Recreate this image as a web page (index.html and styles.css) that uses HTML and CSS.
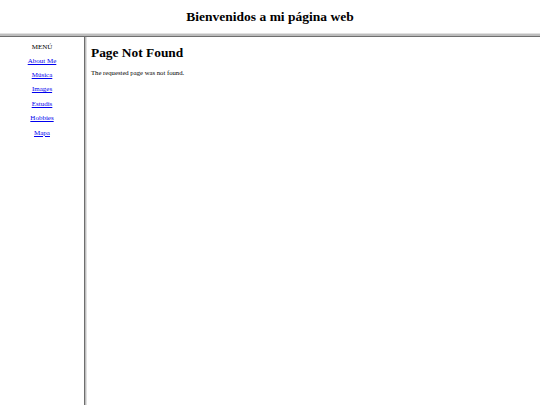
FILE: index.html
```html
<!DOCTYPE html>
<html lang="es">
<head>
<meta charset="utf-8">
<title>Bienvenidos</title>
<link rel="stylesheet" href="styles.css">
</head>
<body>
<div class="page">
  <header class="top">
    <h2 class="title">Bienvenidos a mi página web</h2>
  </header>
  <div class="hbar"></div>
  <div class="main">
    <nav class="side">
      <p class="menu-title">MENÚ</p>
      <a href="#" class="link">About Me</a>
      <a href="#" class="link">Música</a>
      <a href="#" class="link">Images</a>
      <a href="#" class="link">Estudis</a>
      <a href="#" class="link">Hobbies</a>
      <a href="#" class="link">Mapa</a>
    </nav>
    <div class="vbar"></div>
    <section class="content">
      <h1 class="heading">Page Not Found</h1>
      <p class="text">The requested page was not found.</p>
    </section>
  </div>
</div>
</body>
</html>
```
FILE: styles.css
```css
html, body {
  margin: 0;
  padding: 0;
  height: 100%;
  background: #fff;
  font-family: "Liberation Serif", "Times New Roman", serif;
  color: #000;
}
.page {
  display: flex;
  flex-direction: column;
  height: 100%;
}
.top {
  height: 33px;
  display: flex;
  align-items: center;
  justify-content: center;
}
.title {
  margin: 0;
  font-size: 13.5px;
  font-weight: bold;
}
.hbar {
  height: 4px;
  background: linear-gradient(#e0e0e0 0, #e0e0e0 1px, #bdbdbd 1px, #bdbdbd 3px, #6e6e6e 3px);
}
.main {
  flex: 1;
  display: flex;
}
.side {
  width: 84px;
  display: flex;
  flex-direction: column;
  align-items: center;
  padding-top: 5.5px;
  gap: 4px;
}
.menu-title {
  margin: 0;
  font-size: 7px;
  line-height: 9px;
}
.link {
  color: #0000ee;
  font-size: 7px;
  line-height: 10.4px;
  text-decoration: underline;
}
.vbar {
  width: 3px;
  background: linear-gradient(90deg, #6e6e6e 0, #6e6e6e 1px, #bdbdbd 1px, #bdbdbd 2px, #e0e0e0 2px);
}
.content {
  flex: 1;
  padding: 7px 4px;
}
.heading {
  margin: 0;
  font-size: 13.4px;
  line-height: 18px;
}
.text {
  margin: 7px 0 0;
  font-size: 6.7px;
}
```
